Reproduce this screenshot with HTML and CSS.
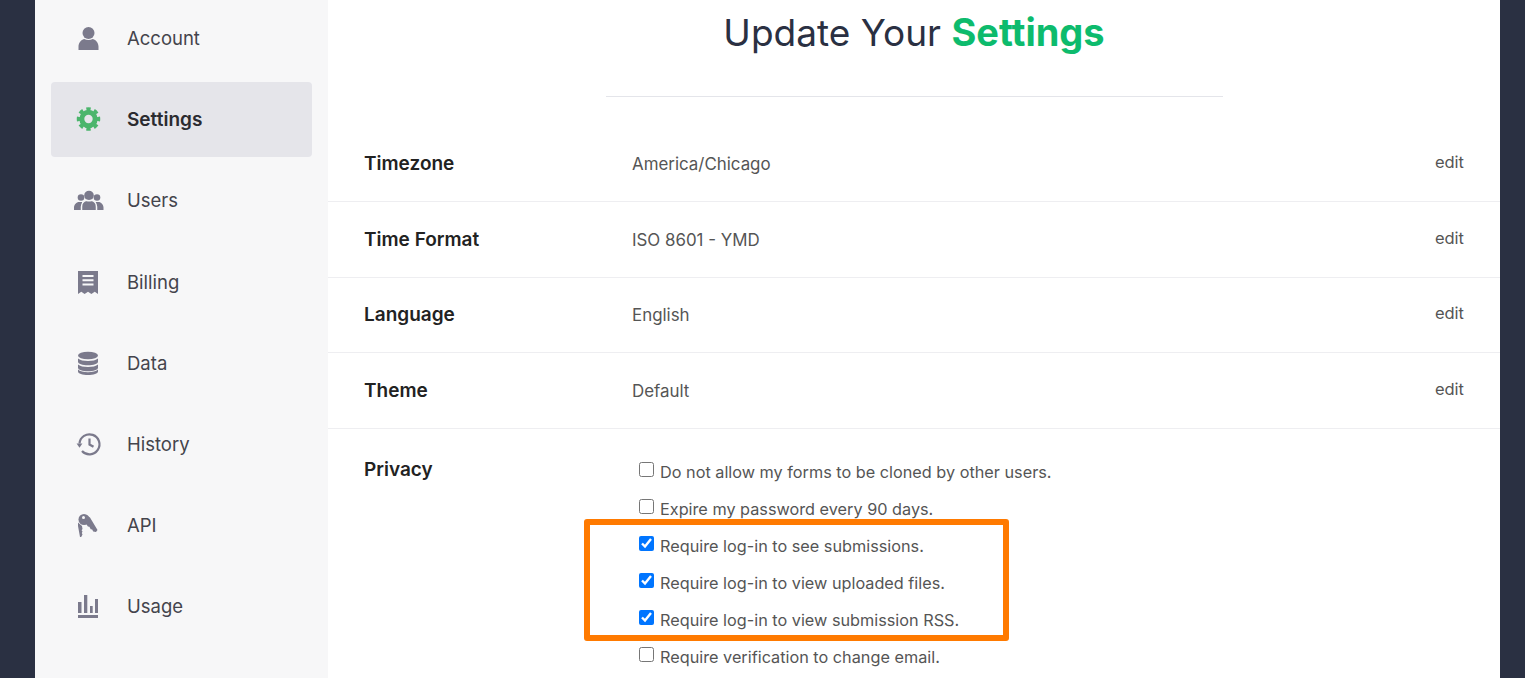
FILE: index.html
```html
<!DOCTYPE html>
<html lang="en">
<head>
    <meta charset="UTF-8">
    <meta name="viewport" content="width=device-width, initial-scale=1.0">
    <title>Update Your Settings</title>
    <link rel="stylesheet" href="styles.css">
</head>
<body>
<div class="page">
    <nav class="sidebar">
        <a class="nav-item">
            <svg class="nav-icon" viewBox="0 0 30 24"><circle cx="14.500" cy="7" r="6"/><path d="M4.500 24v-3.500c0-3.600 2.600-6.600 5.600-7.500 2.800 1.300 5.900 1.300 8.800 0 3 .9 5.600 3.900 5.600 7.500V24z"/></svg>
            <span>Account</span>
        </a>
        <a class="nav-item active">
            <svg class="nav-icon" viewBox="0 0 30 24"><circle class="gear-ring" cx="14.500" cy="12" r="6.700"/><circle class="gear-teeth" cx="14.500" cy="12" r="10" pathLength="8"/></svg>
            <span>Settings</span>
        </a>
        <a class="nav-item">
            <svg class="nav-icon" viewBox="0 0 30 24"><circle cx="7" cy="9.500" r="3.300"/><circle cx="23" cy="9.500" r="3.300"/><path d="M0 22v-2.500c0-3 2.500-5.500 5-5.500h3v8zM29.500 22v-2.500c0-3-2.500-5.500-5-5.500h-3v8z"/><circle cx="15" cy="7.500" r="4.800"/><path class="cutout" d="M7.500 22.800v-4c0-3.500 2.500-6 5-6.500 1.500.6 3.500.6 5 0 2.500.5 5 3 5 6.500v4z"/></svg>
            <span>Users</span>
        </a>
        <a class="nav-item">
            <svg class="nav-icon" viewBox="0 0 30 24"><path d="M4 1h20v23l-3.300-2.200-3.300 2.200-3.400-2.200-3.400 2.200-3.300-2.200L4 24z"/><path class="inset" d="M8.500 5h11v2H8.500zM8.500 9.200h11v2H8.500zM8.500 13.400h11v2H8.500z"/></svg>
            <span>Billing</span>
        </a>
        <a class="nav-item">
            <svg class="nav-icon" viewBox="0 0 30 24"><ellipse cx="14" cy="4.500" rx="10" ry="3.800"/><path d="M4 7.500v3.200c0 2 4.500 3.500 10 3.500s10-1.500 10-3.500V7.500c-1.800 1.700-5.800 2.500-10 2.500S5.800 9.200 4 7.500zM4 13.500v3.200c0 2 4.500 3.500 10 3.500s10-1.500 10-3.500v-3.200c-1.800 1.700-5.800 2.500-10 2.500s-8.200-.8-10-2.500zM4 18.500v2c0 2 4.500 3.500 10 3.500s10-1.500 10-3.500v-2c-1.800 1.700-5.800 2.800-10 2.800s-8.200-1.100-10-2.800z"/></svg>
            <span>Data</span>
        </a>
        <a class="nav-item">
            <svg class="nav-icon" viewBox="0 0 30 24"><path class="clock" d="M5.500 11.500A10 10 0 1 1 8 19"/><path d="M2.600 11.500h5.800l-2.900 4.200z"/><path class="clock-hands" d="M15.500 6.500v6l4 2.300"/></svg>
            <span>History</span>
        </a>
        <a class="nav-item">
            <svg class="nav-icon" viewBox="0 0 30 24"><path d="M4 9.500l4 3.500.5 3-.9 1.300.9 1.300-.7 1.400.7 1.400-1.300 2.600H6l-1-5.500L4 13z"/><circle cx="10" cy="6.500" r="5.500"/><path d="M12 2l4 2.500 7.500 12.500-1.500 2-2.800-.5-1-2-1.500-.3-1.300-2.500-1.500-.2-2.900-4.500z"/><circle class="inset" cx="9.500" cy="4.500" r="1.500"/></svg>
            <span>API</span>
        </a>
        <a class="nav-item">
            <svg class="nav-icon" viewBox="0 0 30 24"><path d="M4 8h3.500v11H4zM10 1h3.300v18H10zM16 12h2.700v7H16zM21 5h3v14h-3zM4 21h20v3H4z"/></svg>
            <span>Usage</span>
        </a>
    </nav>

    <main class="content">
        <h1 class="title">Update Your <strong>Settings</strong></h1>
        <hr class="title-rule">

        <div class="setting-row">
            <div class="setting-label">Timezone</div>
            <div class="setting-value">America/Chicago</div>
            <a class="setting-edit">edit</a>
        </div>
        <div class="setting-row">
            <div class="setting-label">Time Format</div>
            <div class="setting-value">ISO 8601 - YMD</div>
            <a class="setting-edit">edit</a>
        </div>
        <div class="setting-row">
            <div class="setting-label">Language</div>
            <div class="setting-value">English</div>
            <a class="setting-edit">edit</a>
        </div>
        <div class="setting-row">
            <div class="setting-label">Theme</div>
            <div class="setting-value">Default</div>
            <a class="setting-edit">edit</a>
        </div>

        <div class="privacy-row">
            <div class="setting-label">Privacy</div>
            <div class="privacy-list">
                <label class="privacy-item"><input type="checkbox">Do not allow my forms to be cloned by other users.</label>
                <label class="privacy-item"><input type="checkbox">Expire my password every 90 days.</label>
                <label class="privacy-item"><input type="checkbox" checked>Require log-in to see submissions.</label>
                <label class="privacy-item"><input type="checkbox" checked>Require log-in to view uploaded files.</label>
                <label class="privacy-item"><input type="checkbox" checked>Require log-in to view submission RSS.</label>
                <label class="privacy-item"><input type="checkbox">Require verification to change email.</label>
                <div class="highlight"></div>
            </div>
        </div>
    </main>
</div>
</body>
</html>
```

FILE: styles.css
```css
html, body {
    height: 100%;
    margin: 0;
    overflow: hidden;
}
body {
    font-family: 'Inter', 'Liberation Sans', sans-serif;
    background: #2a3042;
    color: #444;
}
.page {
    display: flex;
    height: 100%;
    margin: 0 25px 0 35px;
    background: #fff;
}
.sidebar {
    width: 261px;
    flex-shrink: 0;
    background: #f7f7f8;
    padding: .6px 16px 0;
    display: flex;
    flex-direction: column;
    gap: 6.200px;
}
.nav-item {
    display: flex;
    align-items: center;
    flex-shrink: 0;
    gap: 23px;
    height: 75px;
    padding-left: 23px;
    border-radius: 4px;
    color: #44444c;
    font-size: 18.500px;
}
.nav-item.active {
    background: #e5e5ea;
    color: #2b2b30;
    font-size: 19px;
    font-weight: 600;
}
.nav-icon {
    width: 30px;
    height: 24px;
    flex-shrink: 0;
    fill: #7b7a8c;
}
.nav-item.active .nav-icon {
    fill: none;
}
.gear-ring {
    fill: none;
    stroke: #4bb56c;
    stroke-width: 5;
}
.gear-teeth {
    fill: none;
    stroke: #4bb56c;
    stroke-width: 3.500;
    stroke-dasharray: .55 .45;
    stroke-dashoffset: .275;
}
.cutout {
    stroke: #f7f7f8;
    stroke-width: 1.500;
}
.inset {
    fill: #f7f7f8;
}
.clock {
    fill: none;
    stroke: #7b7a8c;
    stroke-width: 2.200;
}
.clock-hands {
    fill: none;
    stroke: #7b7a8c;
    stroke-width: 2.200;
}

.content {
    flex: 1;
    min-width: 0;
}
.title {
    margin: 0;
    height: 66px;
    line-height: 64px;
    text-align: center;
    font-size: 37px;
    font-weight: 400;
    color: #2a3042;
}
.title strong {
    color: #0dbb6d;
    font-size: 38px;
    font-weight: 700;
}
.title-rule {
    width: 617px;
    height: 1px;
    margin: 30px auto 29px;
    border: 0;
    background: #e4e5ea;
}
.setting-row {
    display: flex;
    align-items: center;
    height: 75px;
    padding: 0 36px;
    border-bottom: 1px solid #eeeef1;
    margin-bottom: -.5px;
}
.setting-label {
    width: 268px;
    flex-shrink: 0;
    font-size: 19px;
    font-weight: 600;
    color: #222;
}
.setting-value {
    flex: 1;
    padding-top: 1px;
    font-size: 16.900px;
    color: #555;
}
.setting-edit {
    position: relative;
    top: -1.500px;
    font-size: 16.500px;
    color: #555;
}
.privacy-row {
    display: flex;
    padding: 25px 36px 0;
}
.privacy-row .setting-label {
    line-height: 34px;
}
.privacy-list {
    position: relative;
    flex: 1;
}
.privacy-item {
    display: flex;
    align-items: center;
    height: 37px;
    font-size: 16.250px;
    color: #555;
}
.privacy-item input {
    width: 15px;
    height: 15px;
    margin: 0 6px 5px 7px;
}
.highlight {
    position: absolute;
    left: -48px;
    top: 65.500px;
    width: 425px;
    height: 122px;
    box-sizing: border-box;
    border: 6px solid #ff7a00;
    border-radius: 3px;
}
```
